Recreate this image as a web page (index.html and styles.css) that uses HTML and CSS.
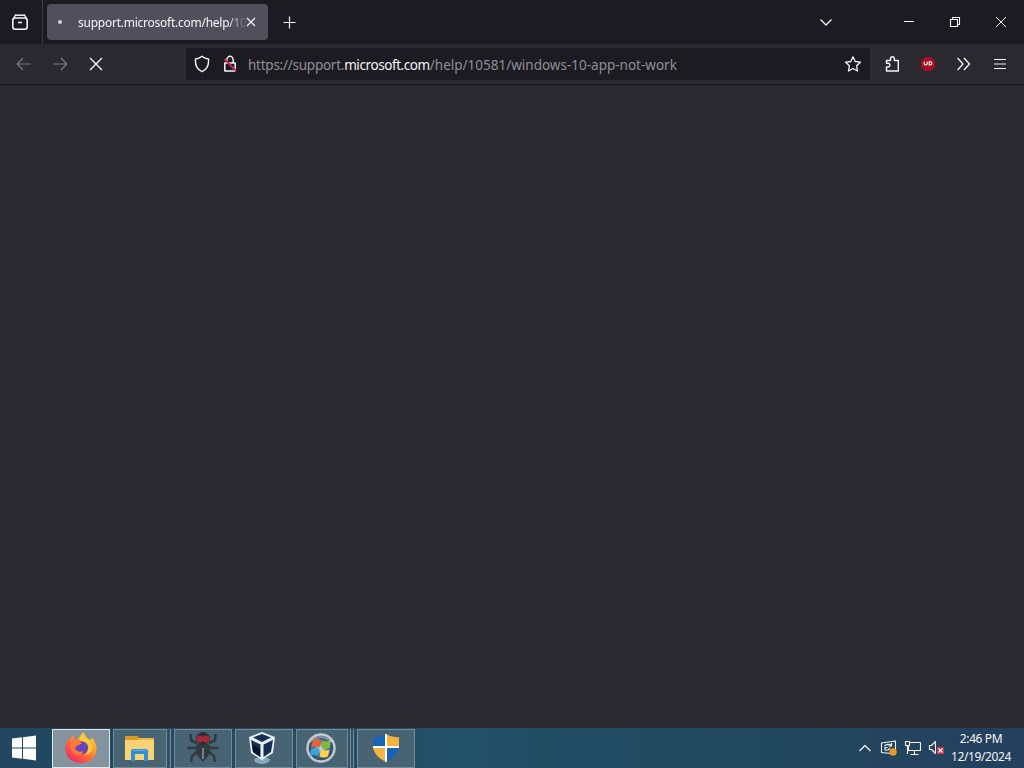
FILE: index.html
```html
<!DOCTYPE html>
<html lang="en">
<head>
    <meta charset="UTF-8">
    <title>support.microsoft.com</title>
    <link rel="stylesheet" href="styles.css">
</head>
<body>
<div class="browser">
    <div class="tab-bar">
        <div class="firefox-view">
            <svg width="18" height="18" viewBox="0 0 18 18" class="line"><path d="M4 2.200h10" stroke-width="1.500"/><rect x="1.800" y="5" width="14.400" height="11.200" rx="2.500" stroke-width="1.600"/><path d="M3 5.200C3.500 3 4 2.200 5 2.200M15 5.200C14.500 3 14 2.200 13 2.200M7 9.600h4" stroke-width="1.500"/></svg>
        </div>
        <div class="tab">
            <span class="tab-dot"></span>
            <span class="tab-title">support.microsoft.com/help/10</span>
            <svg class="line tab-close" width="10" height="10" viewBox="0 0 10 10"><path d="M1 1l8 8M9 1L1 9"/></svg>
        </div>
        <svg class="line new-tab" width="14" height="14" viewBox="0 0 14 14"><path d="M6.500 1.500v12M.5 7.500h12" stroke-width="1.200"/></svg>
        <div class="window-controls">
            <svg class="line" width="14" height="14" viewBox="0 0 14 14"><path d="M1.500 4.500L7 10l5.500-5.500" stroke-width="1.300"/></svg>
            <svg class="line minimize" width="12" height="12" viewBox="0 0 12 12"><path d="M1 5.500h10" stroke-width="1"/></svg>
            <svg class="line restore" width="12" height="12" viewBox="0 0 12 12"><path d="M1.500 3.500h7v7h-7zM3.500 3.500v-2h7v7h-2" stroke-width="1.100"/></svg>
            <svg class="line close" width="12" height="12" viewBox="0 0 12 12"><path d="M1 1l10 10M11 1L1 11" stroke-width="1"/></svg>
        </div>
    </div>
    <div class="toolbar">
        <div class="nav-buttons">
            <svg class="line disabled" width="16" height="16" viewBox="0 0 16 16"><path d="M15 8H1.500M7 2L1.200 8 7 14"/></svg>
            <svg class="line disabled" width="16" height="16" viewBox="0 0 16 16"><path d="M1 8h13.500M9 2l5.800 6L9 14"/></svg>
            <svg class="line" width="16" height="16" viewBox="0 0 16 16"><path d="M2 2l12 12M14 2L2 14" stroke-width="1.400"/></svg>
        </div>
        <div class="url-bar">
            <svg class="line" width="16" height="18" viewBox="0 0 16 18"><path d="M8 1.300C6 3 4 3.700 1.500 4c-.5 6 1.500 10.500 6.500 12.700C13 14.500 15 10 14.500 4 12 3.700 10 3 8 1.300z" stroke-width="1.400"/></svg>
            <svg class="line lock" width="16" height="18" viewBox="0 0 16 18"><path d="M4.800 8V5a3.200 3.700 0 0 1 6.400 0v3M2.800 8h10.400v8H2.800z" stroke-width="1.500"/><path d="M2.500 4l11.500 12" stroke="#c52a4d" stroke-width="2"/></svg>
            <div class="url"><span class="scheme">https://support.</span><span class="domain">microsoft.com</span><span>/help/10581/windows-10-app-not-work</span></div>
            <svg class="line star" width="18" height="18" viewBox="0 0 18 18"><path d="M9 1.800l2.200 4.700 5.200.7-3.800 3.600.9 5.200L9 13.500 4.500 16l.9-5.200L1.600 7.200l5.200-.7z" stroke-width="1.300"/></svg>
        </div>
        <div class="toolbar-actions">
            <svg class="line" width="16" height="18" viewBox="0 0 16 18"><path d="M2.500 16v-4H4a1.900 1.900 0 0 0 0-3.800H2.500V5.500h4V3.700a1.900 1.900 0 0 1 3.800 0v1.800h4V16z" stroke-width="1.400"/></svg>
            <svg width="16" height="16" viewBox="0 0 16 16"><path d="M5 1h6l4 4v6l-4 4H5l-4-4V5z" fill="#a80f24"/><path d="M4.200 5.800v2q0 1.200 1.500 1.200t1.500-1.200v-2M9.200 5.800h.8q1.900 0 1.900 1.600T10 9h-.8z" fill="none" stroke="#fff" stroke-width="1.100"/></svg>
            <svg class="line" width="16" height="16" viewBox="0 0 16 16"><path d="M1.500 2L7 8l-5.500 6M8 2l5.500 6L8 14" stroke-width="1.300"/></svg>
            <svg class="line" width="16" height="16" viewBox="0 0 16 16"><path d="M2 3.500h12M2 8h12M2 12.500h12" stroke-width="1.200"/></svg>
        </div>
    </div>
    <div class="content"></div>
</div>
<div class="taskbar">
    <div class="start">
        <svg width="26" height="26" viewBox="0 0 26 26" fill="#fff"><path d="M1 3.500l10-1.200v10.200H1zM12 2.200l13-1.700v12H12zM1 13.500h10v10.200L1 22.500zM12 13.500h13v12l-13-1.700z"/></svg>
    </div>
    <div class="task active">
        <svg width="34" height="34" viewBox="0 0 34 34">
            <defs>
                <linearGradient id="fox" x1="1" y1="0" x2="0.200" y2="1"><stop offset="0" stop-color="#fff04b"/><stop offset=".35" stop-color="#ffa52b"/><stop offset=".65" stop-color="#ff653b"/><stop offset="1" stop-color="#ed246b"/></linearGradient>
            </defs>
            <path d="M20 1q1 5 6 8.500l2-3Q34 14 32 21.500C30 29 24 32 17 32 8 32 1.500 26 1.500 18 1.500 13 3 10 4.500 7.500l1 3Q7 5 9.500 4q0 4 3 5.500Q15 5 20 1z" fill="url(#fox)"/>
            <circle cx="17.500" cy="16.500" r="6.700" fill="#6545b8"/>
            <path d="M7 11q5-4 8-1l3 2-3 2q-4 1-4 4 3 4 8 2-1 5-7 4-7-3-5-13z" fill="#ff7a36"/>
            <path d="M20 1q-5 4-4 9 7 0 8.500 6 0 5-4 8 9-1 8-9-1-6-6-8-3-2-2.500-6z" fill="#ffc93b"/>
        </svg>
    </div>
    <div class="task stacked">
        <svg width="30" height="28" viewBox="0 0 30 28"><path d="M0 2h12l2 2h15v22H0z" fill="#e9b650"/><path d="M0 6h29v20H0z" fill="#f7d375"/><path d="M0 2h12l2 2-2 2H0z" fill="#d99724"/><path d="M6 27V17q0-2 2-2h13q2 0 2 2v10h-4v-7h-9v7z" fill="#348dce"/><path d="M8 16.500h13" stroke="#58b0e8"/></svg>
    </div>
    <div class="task">
        <svg width="34" height="34" viewBox="0 0 34 34"><path d="M11 12L5 9.500 4.500 3M23 12l6-2.500L29.500 3M11 17H1.500M23 17h9.500M12 20l-6 5-1 6M22 20l6 5 1 6" fill="none" stroke="#303c40" stroke-width="2.500"/><path d="M10 14q7-4 14 0l-1 10-6 7-6-7z" fill="#303c40"/><ellipse cx="17" cy="7.500" rx="7" ry="6.500" fill="#2c3035"/><circle cx="13.800" cy="8" r="3.400" fill="#a5273c"/><circle cx="20.200" cy="8" r="3.400" fill="#a5273c"/><path d="M17 17v11" stroke="#718187" stroke-width="2"/></svg>
    </div>
    <div class="task">
        <svg class="vbox" width="30" height="34" viewBox="0 0 30 34"><path d="M7 28q8-4 16 0l-1 3q-7 4-14 0z" fill="#87a9bd"/><path d="M15 1l13 5-2 16-11 7-11-7L2 6z" fill="#e4f0f7"/><path d="M15 3l9 3.500-9 4.500-9-4.500zM4 9l9.500 4.500V26L6 21zM16.500 13.500L26 9l-2 12-7.500 5z" fill="#142f51"/><path d="M5 13l8 5v8l-7-5z" fill="#07172e"/></svg>
    </div>
    <div class="task stacked triple">
        <svg width="32" height="32" viewBox="0 0 32 32">
            <defs><radialGradient id="orb"><stop offset="0" stop-color="#d9eef4"/><stop offset=".5" stop-color="#457694"/><stop offset="1" stop-color="#29435d"/></radialGradient></defs>
            <circle cx="15" cy="16" r="13.500" fill="url(#orb)" stroke="#c2c8d0" stroke-width="2.500"/>
            <path d="M7 8q4-2 8.500 0L14 15.500q-4.500-2-9 0z" fill="#e86139"/><path d="M16.500 8.500q4 2 8.500-.5L23.500 16q-4.500 2-8.500-.5z" fill="#80b840"/><path d="M5 17q4.500-2 8.500 0L12 24q-4-2-8 0z" fill="#3ba3df"/><path d="M15 17.500q4 2 8.500 0L22 24.500q-4 2-8.500 0z" fill="#ffd14b"/>
            <path d="M4 10Q14 0 26 10" fill="none" stroke="#d9e6ef" stroke-width="2" opacity=".45"/>
        </svg>
    </div>
    <div class="task last">
        <svg width="28" height="30" viewBox="0 0 28 30"><path d="M14 1q6 4 13 3v9H14zM1 15h13v14Q3 24 1 15z" fill="#f5b342"/><path d="M14 1Q8 5 1 4v9h13zM14 15h13q-2 9-13 14z" fill="#1764b5"/><path d="M14 1v28M1 14h26" stroke="#fff" stroke-width="2"/></svg>
    </div>
    <div class="tray">
        <svg class="line" width="14" height="16" viewBox="0 0 14 16"><path d="M1.500 11L7 5.500l5.500 5.500" stroke-width="1.200"/></svg>
        <svg class="line" width="18" height="18" viewBox="0 0 18 18"><path d="M1.500 4l14-2v13l-14-1.500z" stroke-width="1.100"/><path d="M4.500 7q2-2 5-1.500l2 1M11.500 4v3H8.500M5 11V8.500h2.500M5 11q3 1 5-2" stroke-width="1.200"/><circle cx="13" cy="13" r="3.700" fill="#e59b22" stroke="none"/></svg>
        <svg class="line" width="18" height="18" viewBox="0 0 18 18"><path d="M5.500 3.500h11v8H4.500V7M1.500 2.500h4v4h-4zM3.500 7v8M10.500 12v3M6.500 15.500h8" stroke-width="1.100"/></svg>
        <svg class="line" width="17" height="18" viewBox="0 0 17 18"><path d="M1.500 6.500h2l4-4v12l-4-4h-2z" stroke-width="1.100"/><path d="M9 8h7v7H9z" fill="#d72d43" stroke="none"/><path d="M10.500 9.500l4 4M14.500 9.500l-4 4" stroke-width="1.300"/></svg>
    </div>
    <div class="clock"><span>2:46 PM</span><span>12/19/2024</span></div>
</div>
</body>
</html>
```
FILE: styles.css
```css
* {
    box-sizing: border-box;
}
body {
    margin: 0;
    width: 1024px;
    height: 768px;
    display: flex;
    flex-direction: column;
    overflow: hidden;
    background: #2a292f;
    color: #f4f4f7;
    font-family: "Noto Sans", "Open Sans", sans-serif;
}
svg {
    display: block;
    flex: none;
}
.line {
    fill: none;
    stroke: #f4f4f7;
    stroke-width: 1.2;
    stroke-linejoin: round;
}
.browser {
    height: 728px;
}
.tab-bar {
    height: 44px;
    display: flex;
    align-items: center;
    background: #1c1b21;
}
.firefox-view {
    width: 43px;
    height: 44px;
    padding: 13px 0 0 11px;
    border-right: 1px solid #3b3942;
}
.tab {
    width: 221px;
    height: 36px;
    margin-left: 4px;
    padding: 0 12px 0 11px;
    display: flex;
    align-items: center;
    border-radius: 4px;
    background: #514f5c;
}
.tab-dot {
    width: 4px;
    height: 4px;
    border-radius: 50%;
    background: #d0cfdb;
}
.tab-title {
    width: 168px;
    padding-top: 2px;
    margin-left: 16px;
    white-space: nowrap;
    font-size: 12px;
    line-height: 20px;
    letter-spacing: -0.25px;
    mask-image: linear-gradient(to right, #000 150px, transparent 169px);
}
.new-tab {
    margin-left: 15px;
}
.window-controls {
    display: flex;
    align-items: center;
    margin-left: auto;
    margin-right: 17px;
}
.minimize {
    margin-left: 70px;
}
.restore, .close {
    margin-left: 34px;
}
.toolbar {
    height: 41px;
    display: flex;
    align-items: center;
    border-bottom: 1px solid #141319;
    background: #2a292f;
}
.nav-buttons {
    width: 186px;
    display: flex;
    gap: 20px;
    padding-left: 16px;
}
.disabled {
    opacity: 0.4;
}
.url-bar {
    width: 684px;
    height: 32px;
    display: flex;
    align-items: center;
    padding-left: 8px;
    background: #1c1b21;
}
.lock {
    margin-left: 12px;
}
.url {
    margin-left: 10px;
    padding-top: 2px;
    flex: 1;
    white-space: nowrap;
    font-size: 13.5px;
    line-height: 20px;
    color: #8f8e96;
}
.scheme {
    letter-spacing: -0.25px;
}
.domain {
    color: #f4f4f7;
    letter-spacing: -0.42px;
}
.star {
    margin-right: 8px;
}
.toolbar-actions {
    display: flex;
    align-items: center;
    gap: 20px;
    padding-left: 14px;
}
.content {
    height: 643px;
    background: #2a292f;
}
.taskbar {
    height: 40px;
    display: flex;
    align-items: center;
    background: linear-gradient(to right, #22465f, #225066 45%, #22485f 75%, #233f5d);
}
.start {
    width: 52px;
    padding-left: 11px;
}
.task {
    width: 58px;
    height: 39px;
    margin-right: 3px;
    display: flex;
    flex: none;
    align-items: center;
    justify-content: center;
    border: 1px solid #748c99;
    background: #486372;
}
.active {
    border-color: #e1e8eb;
    background: #84939d;
}
.stacked {
    width: 54px;
    margin-right: 7px;
    box-shadow: 3px 0 #344f60, 4px 0 #77909d;
}
.triple {
    width: 52px;
    margin-right: 9px;
    box-shadow: 2px 0 #344f60, 3px 0 #77909d, 5px 0 #344f60, 6px 0 #77909d;
}
.vbox {
    margin-right: 4px;
}
.last {
    margin-right: 0;
}
.tray {
    display: flex;
    align-items: center;
    gap: 6px;
    margin-left: auto;
}
.tray svg:first-child {
    margin-right: 2px;
}
.clock {
    width: 79px;
    display: flex;
    flex-direction: column;
    align-items: center;
    font-size: 12px;
    line-height: 18px;
    letter-spacing: -0.4px;
    padding-right: 7px;
}
```
